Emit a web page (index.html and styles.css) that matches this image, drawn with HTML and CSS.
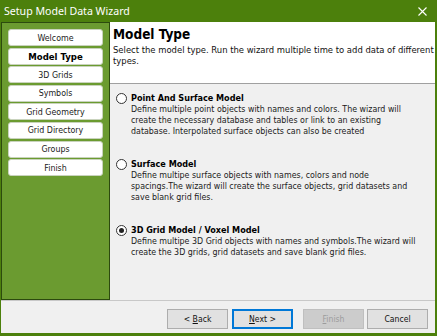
FILE: index.html
```html
<!DOCTYPE html>
<html>
<head>
<meta charset="utf-8">
<link rel="stylesheet" href="styles.css">
</head>
<body>
<div class="window">
  <div class="titlebar">
    <span class="title">Setup Model Data Wizard</span>
    <svg class="close" width="9" height="9" viewBox="0 0 9 9"><path d="M0.5 0.5 L8.5 8.5 M8.5 0.5 L0.5 8.5" stroke="#fff" stroke-width="1.1" fill="none"/></svg>
  </div>
  <div class="main">
    <nav class="sidebar">
      <div class="step">Welcome</div>
      <div class="step active">Model Type</div>
      <div class="step">3D Grids</div>
      <div class="step">Symbols</div>
      <div class="step">Grid Geometry</div>
      <div class="step">Grid Directory</div>
      <div class="step">Groups</div>
      <div class="step">Finish</div>
    </nav>
    <section class="page">
      <header class="page-head">
        <h1>Model Type</h1>
        <p>Select the model type. Run the wizard multiple time to add data of different<br>types.</p>
      </header>
      <div class="options">
        <div class="option">
          <span class="radio"></span>
          <div class="opt-text">
            <div class="opt-title">Point And Surface Model</div>
            <div class="opt-desc">Define multiple point objects with names and colors. The wizard will<br>create the necessary database and tables or link to an existing<br>database. Interpolated surface objects can also be created</div>
          </div>
        </div>
        <div class="option">
          <span class="radio"></span>
          <div class="opt-text">
            <div class="opt-title">Surface Model</div>
            <div class="opt-desc">Define multipe surface objects with names, colors and node<br>spacings.The wizard will create the surface objects, grid datasets and<br>save blank grid files.</div>
          </div>
        </div>
        <div class="option">
          <span class="radio checked"></span>
          <div class="opt-text">
            <div class="opt-title">3D Grid Model / Voxel Model</div>
            <div class="opt-desc">Define multipe 3D Grid objects with names and symbols.The wizard will<br>create the 3D grids, grid datasets and save blank grid files.</div>
          </div>
        </div>
      </div>
    </section>
  </div>
  <footer class="footer">
    <button class="btn">&lt; <u>B</u>ack</button>
    <button class="btn default"><u>N</u>ext &gt;</button>
    <button class="btn disabled"><u>F</u>inish</button>
    <button class="btn">Cancel</button>
  </footer>
</div>
</body>
</html>
```

FILE: styles.css
```css
html, body {
  margin: 0;
  padding: 0;
  width: 437px;
  height: 336px;
  overflow: hidden;
}

.window {
  width: 437px;
  height: 336px;
  box-sizing: border-box;
  background: #4c800c;
  padding: 0 2px 3px 1px;
  display: flex;
  flex-direction: column;
  font-family: "DejaVu Sans Condensed", "DejaVu Sans", sans-serif;
  font-size: 8.6px;
  color: #111;
}

.titlebar {
  height: 22px;
  flex: none;
  display: flex;
  align-items: center;
  justify-content: space-between;
  padding: 0 8px 0 3px;
}

.title {
  font-family: "Noto Sans", sans-serif;
  font-size: 10.6px;
  color: #fff;
}

.close {
  display: block;
}

.main {
  flex: none;
  height: 278px;
  display: flex;
  background: #f0f0f0;
}

.sidebar {
  width: 109px;
  box-sizing: border-box;
  background: #6b9b30;
  border: 1px solid #2c4a0e;
  padding: 6px 0 0 6px;
  display: flex;
  flex-direction: column;
  gap: 1.6px;
}

.step {
  width: 95px;
  height: 17px;
  box-sizing: border-box;
  background: #fff;
  border: 1px solid #c9d3bd;
  border-radius: 3px;
  display: flex;
  align-items: center;
  justify-content: center;
  font-size: 8.8px;
  color: #1a1a1a;
}

.step.active {
  font-weight: bold;
  font-size: 9.5px;
  color: #000;
}

.page {
  flex: 1;
  display: flex;
  flex-direction: column;
  background: #f0f0f0;
}

.page-head {
  height: 57px;
  flex: none;
  background: #fff;
  border-bottom: 1px solid #a0a0a0;
  padding: 4px 0 0 3px;
}

.page-head h1 {
  margin: 0;
  font-size: 13.5px;
  line-height: 16px;
  font-weight: bold;
  color: #000;
}

.page-head p {
  margin: 2px 0 0;
  font-size: 9.4px;
  line-height: 11px;
  white-space: nowrap;
}

.options {
  padding: 8.5px 0 0 6px;
  display: flex;
  flex-direction: column;
  gap: 22px;
}

.option {
  display: flex;
  align-items: flex-start;
}

.radio {
  flex: none;
  width: 11px;
  height: 11px;
  box-sizing: border-box;
  border: 1px solid #333;
  border-radius: 50%;
  background: #fff;
  margin: 0 4px 0 0;
  display: flex;
  align-items: center;
  justify-content: center;
}

.radio.checked::after {
  content: "";
  width: 5px;
  height: 5px;
  border-radius: 50%;
  background: #222;
}

.opt-title {
  font-weight: bold;
  font-size: 9px;
  line-height: 11px;
  color: #000;
}

.opt-desc {
  font-size: 8.8px;
  line-height: 11px;
  white-space: nowrap;
  color: #1a1a1a;
}

.footer {
  flex: 1;
  background: #f0f0f0;
  border-top: 1px solid #c8c8c8;
  display: flex;
  align-items: flex-start;
  padding: 8px 7px 0 0;
  justify-content: flex-end;
}

.btn {
  width: 61px;
  height: 20px;
  box-sizing: border-box;
  background: #e1e1e1;
  border: 1px solid #adadad;
  font-family: "DejaVu Sans Condensed", "DejaVu Sans", sans-serif;
  font-size: 8.6px;
  color: #111;
  padding: 0;
  margin: 0 0 0 4px;
}

.btn.default {
  border: 1px solid #0078d7;
  box-shadow: inset 0 0 0 1px #0078d7;
}

.btn.disabled {
  margin-left: 10px;
  background: #cccccc;
  border-color: #bfbfbf;
  color: #9c9c9c;
}

.btn.disabled + .btn {
  margin-left: 3px;
}
```
